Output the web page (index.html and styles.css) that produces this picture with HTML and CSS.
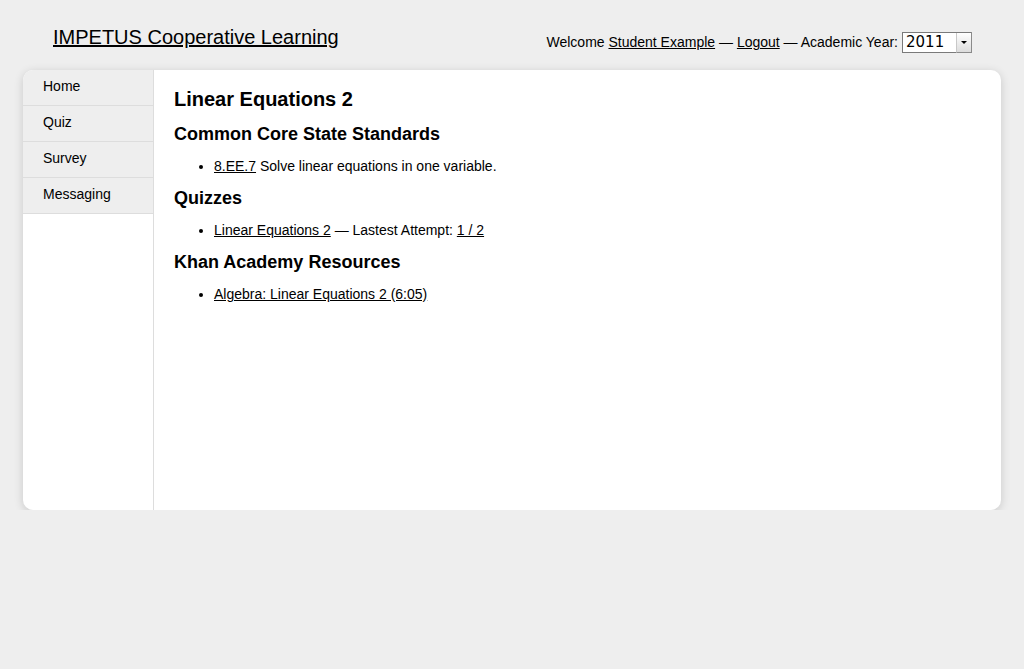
FILE: index.html
```html
<!DOCTYPE html>
<html>
<head>
<meta charset="utf-8">
<title>IMPETUS Cooperative Learning</title>
<link rel="stylesheet" href="styles.css">
</head>
<body>
<header class="header">
  <a class="brand" href="#">IMPETUS Cooperative Learning</a>
  <div class="userbar">
    <span>Welcome <a href="#">Student Example</a> — <a href="#">Logout</a> — Academic Year:</span>
    <div class="select">
      <span class="select-value">2011</span>
      <span class="select-btn"><span class="tri"></span></span>
    </div>
  </div>
</header>
<div class="card">
  <nav class="sidebar">
    <a class="nav-item" href="#">Home</a>
    <a class="nav-item" href="#">Quiz</a>
    <a class="nav-item" href="#">Survey</a>
    <a class="nav-item" href="#">Messaging</a>
  </nav>
  <main class="content">
    <h1>Linear Equations 2</h1>
    <h2>Common Core State Standards</h2>
    <ul>
      <li><a href="#">8.EE.7</a> Solve linear equations in one variable.</li>
    </ul>
    <h2>Quizzes</h2>
    <ul>
      <li><a href="#">Linear Equations 2</a> — Lastest Attempt: <a href="#">1 / 2</a></li>
    </ul>
    <h2>Khan Academy Resources</h2>
    <ul>
      <li><a href="#">Algebra: Linear Equations 2 (6:05)</a></li>
    </ul>
  </main>
</div>
</body>
</html>
```
FILE: styles.css
```css
html, body {
  margin: 0;
  padding: 0;
  background: #eeeeee;
  font-family: "Liberation Sans", Arial, Helvetica, sans-serif;
  font-size: 14px;
  line-height: 18px;
  color: #000;
}
a { color: #000; text-decoration: underline; }

.header {
  display: flex;
  justify-content: space-between;
  align-items: flex-start;
  height: 70px;
  padding: 25px 52px 0 53px;
  box-sizing: border-box;
}
.brand {
  font-size: 20px;
  line-height: 24px;
}
.userbar {
  display: flex;
  align-items: center;
  height: 22px;
  margin-top: 6px;
}
.select {
  display: flex;
  margin-left: 4px;
  width: 70px;
  height: 21px;
  box-sizing: border-box;
  border: 1px solid #7a7a7a;
  border-right-color: #999;
  background: #fff;
}
.select-value {
  flex: 1;
  font-family: "DejaVu Sans", sans-serif;
  font-size: 15px;
  line-height: 19px;
  padding-left: 3px;
}
.select-btn {
  width: 14px;
  display: flex;
  align-items: center;
  justify-content: center;
  background: linear-gradient(#ffffff, #dcdcdc);
  border-left: 1px solid #c8c8c8;
  border-bottom: 1px solid #8a8a8a;
  border-right: 1px solid #8a8a8a;
  margin: 0 -1px -1px 0;
}
.tri {
  width: 0;
  height: 0;
  border-left: 3px solid transparent;
  border-right: 3px solid transparent;
  border-top: 3px solid #000;
}

.card {
  display: flex;
  margin: 0 23px;
  height: 440px;
  background: #fff;
  border-radius: 10px;
  overflow: hidden;
  box-shadow: 0 2px 10px rgba(0, 0, 0, 0.16);
}
.sidebar {
  width: 130px;
  flex: none;
  border-right: 1px solid #dddddd;
  display: flex;
  flex-direction: column;
}
.nav-item {
  display: block;
  background: #eeeeee;
  border-bottom: 1px solid #dddddd;
  padding: 7px 20px 10px;
  text-decoration: none;
}
.content {
  flex: 1;
  padding: 17px 20px 0;
}
h1 {
  font-size: 20px;
  line-height: 24px;
  font-weight: bold;
  margin: 0 0 13px;
}
h2 {
  font-size: 18px;
  line-height: 20px;
  font-weight: bold;
  margin: 0;
}
ul {
  margin: 13px 0 13px;
  padding-left: 40px;
}
```
